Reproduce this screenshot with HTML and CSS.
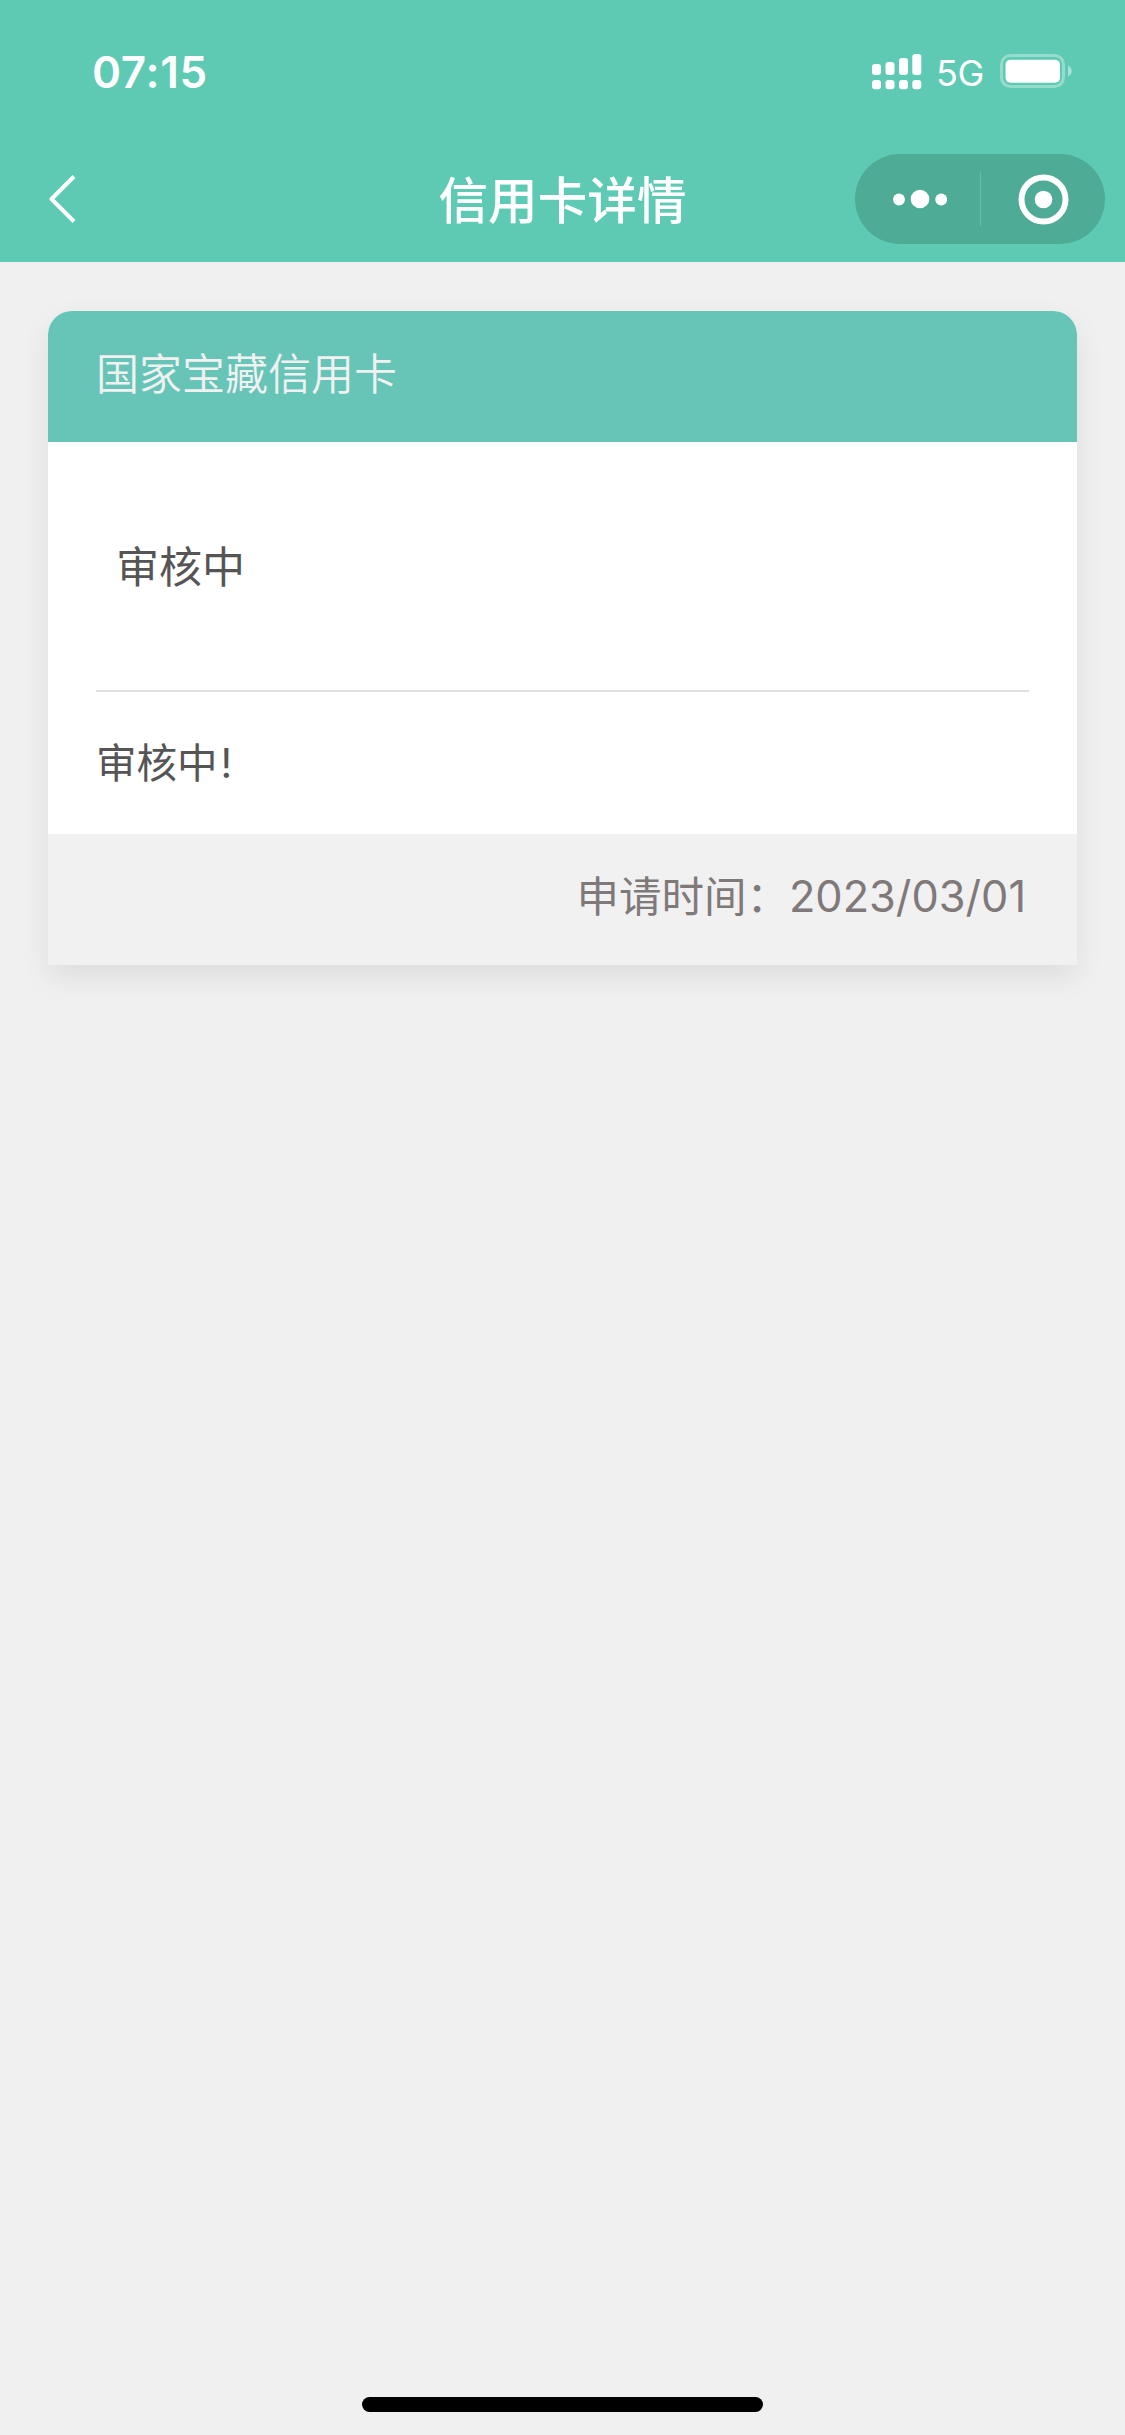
FILE: index.html
```html
<!DOCTYPE html>
<html lang="zh-CN">
<head>
<meta charset="utf-8">
<title>信用卡详情</title>
<link rel="stylesheet" href="styles.css">
</head>
<body>
<header class="top">
  <div class="status">
    <span class="clock">07:15</span>
    <div class="indicators">
      <svg class="signal" width="50" height="36" viewBox="0 0 50 36" fill="#fff">
        <rect x="0" y="10" width="9" height="11" rx="3"/>
        <rect x="13.5" y="8" width="9" height="13" rx="3"/>
        <rect x="27" y="4" width="9" height="17" rx="3"/>
        <rect x="40.3" y="0" width="9" height="21" rx="3"/>
        <rect x="0" y="26" width="9" height="9.3" rx="3"/>
        <rect x="13.5" y="26" width="9" height="9.3" rx="3"/>
        <rect x="27" y="26" width="9" height="9.3" rx="3"/>
        <rect x="40.3" y="26" width="9" height="9.3" rx="3"/>
      </svg>
      <span class="network">5G</span>
      <svg class="battery" width="72" height="34" viewBox="0 0 72 34">
        <rect x="1.5" y="1.5" width="62" height="31" rx="9" fill="none" stroke="#fff" stroke-opacity=".35" stroke-width="3"/>
        <rect x="5.5" y="5.7" width="54.5" height="23" rx="5" fill="#fff"/>
        <path d="M68 11.5c5 2 5 9 0 11z" fill="#fff" fill-opacity=".45"/>
      </svg>
    </div>
  </div>
  <nav class="nav">
    <svg class="back" width="28" height="50" viewBox="0 0 28 50" fill="none" stroke="#fff" stroke-width="4" stroke-linejoin="round">
      <path d="M25 2.5 2.5 25 25 47.5"/>
    </svg>
    <h1 class="title">信用卡详情</h1>
    <div class="capsule">
      <svg class="more" width="54" height="20" viewBox="0 0 54 20" fill="#fff">
        <circle cx="6" cy="10.5" r="5.9"/><circle cx="27" cy="10" r="9.3"/><circle cx="48.2" cy="10.5" r="5.9"/>
      </svg>
      <span class="divider"></span>
      <svg class="close" width="51" height="51" viewBox="0 0 51 51">
        <circle cx="25.5" cy="25.5" r="22" fill="none" stroke="#fff" stroke-width="6"/>
        <circle cx="25.5" cy="25.5" r="8.8" fill="#fff"/>
      </svg>
    </div>
  </nav>
</header>
<main class="content">
  <section class="card">
    <h2 class="card-name">国家宝藏信用卡</h2>
    <div class="card-body">
      <p class="state">审核中</p>
      <p class="message">审核中<span class="mark">!</span></p>
    </div>
    <footer class="card-foot"><span class="label">申请时间：</span><time class="date">2023/03/01</time></footer>
  </section>
</main>
<div class="home-bar"></div>
</body>
</html>
```
FILE: styles.css
```css
* { box-sizing: border-box; }

body {
  display: flex;
  flex-direction: column;
  min-height: 2435px;
  margin: 0;
  background: #f0f0f0;
  font-family: Inter, "Noto Sans CJK SC", sans-serif;
}

svg { display: block; }
h1, h2, p { margin: 0; }

.top {
  height: 262px;
  background: #5ecab3;
  color: #fff;
}

.status {
  display: flex;
  justify-content: space-between;
  height: 132px;
  padding: 54px 53px 0 92px;
}

.clock {
  margin-top: -9px;
  font-size: 44px;
  font-weight: 600;
  line-height: 54px;
  letter-spacing: 0.7px;
}

.indicators { display: flex; align-items: flex-start; }

.network {
  width: 47px;
  margin: -3px 17px 0 14px;
  font-size: 36px;
  line-height: 44px;
  letter-spacing: -0.5px;
}

.nav {
  display: grid;
  grid-template-columns: 270px 1fr 270px;
  align-items: center;
  height: 130px;
  padding-bottom: 4px;
}

.back { margin: 8px 0 0 49px; }

.title {
  padding-top: 12px;
  font-size: 49.6px;
  font-weight: 500;
  line-height: 72px;
  text-align: center;
}

.capsule {
  display: flex;
  align-items: center;
  width: 250px;
  height: 90px;
  margin-top: 8px;
  padding: 0 36px 0 38px;
  border-radius: 45px;
  background: #4eab96;
}

.divider {
  width: 1px;
  height: 54px;
  margin: 0 37px 0 33px;
  background: #6dbcaa;
}

.content { flex: 1; padding: 49px 48px 0; }

.card {
  border-radius: 24px 24px 0 0;
  background: #fff;
  box-shadow: 0 12px 30px rgba(0, 0, 0, 0.08);
}

.card-name {
  height: 131px;
  padding-left: 48px;
  border-radius: 24px 24px 0 0;
  background: #66c5b7;
  color: #f1f1f1;
  font-size: 43px;
  font-weight: 350;
  line-height: 127px;
}

.card-body { height: 392px; padding: 0 48px; }

.state {
  height: 250px;
  padding-left: 20px;
  border-bottom: 2px solid #dfdfdf;
  color: #555;
  font-size: 43px;
  line-height: 250px;
}

.message {
  color: #555;
  font-size: 40.5px;
  line-height: 144px;
}

.mark { margin-left: 3px; }

.card-foot {
  display: flex;
  justify-content: flex-end;
  height: 131px;
  padding-right: 51px;
  background: #f1f1f1;
  color: #7f7979;
  font-size: 42.5px;
  line-height: 126px;
}

.date { font-size: 43.3px; line-height: 125px; }

.home-bar {
  width: 401px;
  height: 15px;
  margin: 0 auto 23px;
  border-radius: 8px;
  background: #000;
}
```
